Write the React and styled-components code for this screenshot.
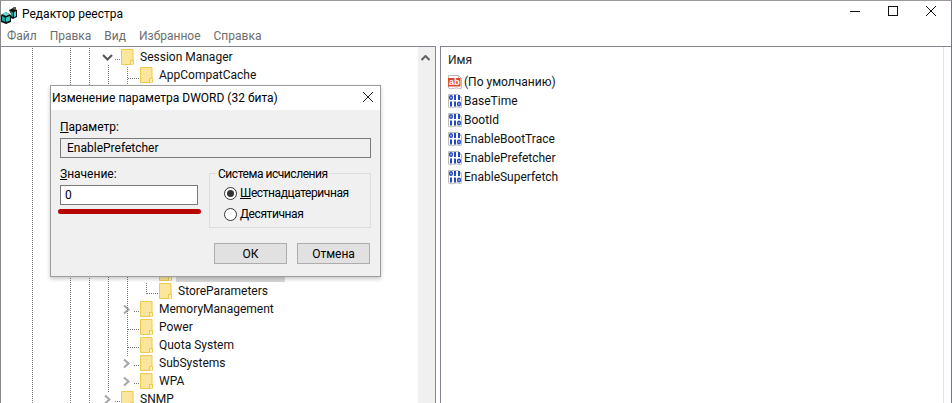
import React from "react";
import styled, { createGlobalStyle } from "styled-components";

const Global = createGlobalStyle`
  html, body { margin: 0; padding: 0; background: #fff; }
  body { font-family: Roboto, "Noto Sans", sans-serif; font-size: 12px; color: #000; overflow: hidden; }
`;

const Win = styled.div`
  width: 952px; height: 403px; box-sizing: border-box; position: relative; overflow: hidden;
  border-top: 1px solid #9a9a9a; border-left: 1px solid #8a8a8a; border-right: 1px solid #6f7780;
  display: flex; flex-direction: column; background: #fff;
`;
const TitleBar = styled.div`
  height: 25px; display: flex; align-items: center; flex: none;
`;
const AppIcon = styled.svg`width: 17px; height: 17px; flex: none; margin-right: 4px; margin-top: 3px;`;
const TitleText = styled.span`flex: 1; font-size: 12px;`;
const Controls = styled.div`display: flex; padding-right: 1px; align-self: flex-start;`;
const Ctrl = styled.svg`width: 38px; height: 21px; display: block;`;
const Menu = styled.div`
  height: 20px; display: flex; align-items: center; flex: none; color: #6d6d6d;
`;
const MenuItem = styled.span`padding: 0 7px 0 6px; font-size: 12px;`;
const Panes = styled.div`flex: 1; display: flex; min-height: 0;`;
const TreePane = styled.div`
  width: 435px; flex: none; margin-left: -1px; border-top: 1px solid #828790; border-right: 1px solid #828790;
  display: flex; position: relative; box-sizing: content-box;
`;
const Tree = styled.div`flex: 1; position: relative; padding-top: 1px; overflow: hidden;`;
const Guides = styled.svg`position: absolute; left: 0; top: 0; width: 418px; height: 357px; pointer-events: none;`;
const Row = styled.div`
  height: 18px; display: flex; align-items: center; position: relative;
  padding-left: ${p => p.$x}px; white-space: nowrap;
`;
const Hidden = styled.div`height: ${p => p.$n * 18}px;`;
const Chevron = styled.svg`position: absolute; left: ${p => p.$x}px; top: 4px; width: 11px; height: 11px;`;
const Folder = styled.svg`width: 13px; height: 16px; flex: none; margin-right: 6px;`;
const Label = styled.span`font-size: 12px; color: #111;`;
const SelectBar = styled.div`width: 109px; height: 18px; background: #d9d9d9; margin-left: -2px;`;
const Scrollbar = styled.div`width: 17px; flex: none; background: #f0f0f0; display: flex; justify-content: center; align-items: flex-start;`;
const ScrollUp = styled.svg`width: 9px; height: 6px; margin-top: 8px; margin-left: -3px;`;
const Gap = styled.div`width: 4px; flex: none;`;
const ListPane = styled.div`
  flex: 1; border-top: 1px solid #828790; border-left: 1px solid #828790; position: relative;
  display: flex; flex-direction: column;
`;
const ColumnEdge = styled.div`position: absolute; right: 7px; top: 0; bottom: 0; width: 1px; background: #e2e2e2;`;
const ColHeader = styled.div`height: 25px; padding-left: 7px; display: flex; align-items: center; flex: none; color: #222;`;
const ValueRow = styled.div`height: 19px; display: flex; align-items: center; padding-left: 6px;`;
const ValueIcon = styled.svg`width: 16px; height: 16px; flex: none; margin-right: 1px;`;

const Dialog = styled.div`
  position: absolute; left: 49px; top: 84px; width: 331px; height: 192px; box-sizing: border-box;
  border: 1px solid #9d9d9d; background: #f0f0f0; box-shadow: 0 2px 4px rgba(0,0,0,.22);
  display: flex; flex-direction: column; font-size: 12px;
`;
const DlgTitle = styled.div`
  height: 24px; background: #fff; display: flex; align-items: center; justify-content: space-between;
  padding-left: 1px; flex: none;
`;
const DlgClose = styled.svg`width: 10px; height: 10px; margin-right: 7px; margin-bottom: 2px;`;
const DlgBody = styled.div`flex: 1; padding: 8px 9px 0 9px; display: flex; flex-direction: column; position: relative;`;
const FieldLabel = styled.div`height: 18px; line-height: 18px;`;
const U = styled.u`text-underline-offset: 1px;`;
const ReadOnly = styled.div`
  height: 18px; border: 1px solid #7a7a7a; background: #f0f0f0; margin-top: 2px; line-height: 18px;
  padding-left: 6px; box-sizing: content-box;
`;
const Columns = styled.div`display: flex; margin-top: 7px;`;
const Left = styled.div`width: 138px; flex: none; margin-right: 11px;`;
const ValueInput = styled.div`
  height: 18px; border: 1px solid #7a7a7a; background: #fff; line-height: 18px; padding-left: 4px; margin-top: 2px;
`;
const Group = styled.div`
  flex: 1; height: 55px; margin-top: 8px; border: 1px solid #dcdcdc; position: relative;
  display: flex; flex-direction: column; padding: 10px 0 0 14px; box-sizing: border-box; gap: 3px;
`;
const Legend = styled.span`
  position: absolute; left: 7px; top: -8px; background: #f0f0f0; padding: 0 1px; line-height: 16px; letter-spacing: -0.45px;
`;
const RadioRow = styled.div`display: flex; align-items: center; height: 18px; letter-spacing: -0.42px;`;
const Radio = styled.span`
  width: 13px; height: 13px; border-radius: 50%; border: 1px solid #333; background: #fff; box-sizing: border-box;
  display: inline-flex; align-items: center; justify-content: center; margin-right: 3px; flex: none;
  &::after { content: ""; width: 7px; height: 7px; border-radius: 50%; background: ${p => p.$on ? "#333" : "transparent"}; }
`;
const Buttons = styled.div`display: flex; justify-content: flex-end; gap: 10px; margin-top: 15px; padding-right: 1px;`;
const Btn = styled.div`
  width: 73px; height: 21px; box-sizing: border-box; border: 1px solid #adadad; background: #e1e1e1;
  display: flex; align-items: center; justify-content: center;
`;
const RedMark = styled.div`
  position: absolute; left: 7px; top: 99px; width: 143px; height: 5px; border-radius: 3px; background: #b80500;
`;

const FolderIcon = () => (
  <Folder viewBox="0 0 13 16">
    <path d="M.5.5h11.500v15H.5z" fill="#fbe69c" stroke="#eec94f" />
    <path d="M9.500 15.500v-4h3v4" fill="#fff1bd" stroke="#eec94f" />
  </Folder>
);
const ChevronRight = ({ x }) => (
  <Chevron $x={x} viewBox="0 0 11 11"><path d="M3 1.500 7.500 5.500 3 9.500" fill="none" stroke="#a6a6a6" strokeWidth="2" /></Chevron>
);
const ChevronDown = ({ x }) => (
  <Chevron $x={x} viewBox="0 0 11 11"><path d="M1 3 5.500 7.500 10 3" fill="none" stroke="#555" strokeWidth="2" /></Chevron>
);
const Page = ({ children }) => (
  <ValueIcon viewBox="0 0 16 16">
    <path d="M1.500 1.500h10l3 3v9.600c-2 1.400-3.500-.8-6.500 0s-4.500 1-6.500 0z" fill="#fff" stroke="#bdbdbd" />
    <path d="M11.500 1.500v3h3" fill="none" stroke="#bdbdbd" />
    {children}
  </ValueIcon>
);
const AbIcon = () => (
  <Page>
    <rect x="1" y="4" width="12.500" height="8.500" fill="#d9482a" />
    <text x="7.200" y="11.200" fontSize="9.500" fontWeight="700" fontFamily="Liberation Sans, sans-serif" fill="#fff" textAnchor="middle">ab</text>
  </Page>
);
const Bit = ({ x, y, on }) => on
  ? <rect x={x + 1} y={y} width="2" height="5" fill="#2447c8" />
  : <rect x={x + .75} y={y + .75} width="2.500" height="3.500" rx="1.200" fill="none" stroke="#2447c8" strokeWidth="1.500" />;
const BinIcon = () => (
  <Page>
    <Bit x={2} y={2} />
    <Bit x={6} y={2} on />
    <Bit x={10} y={2} on />
    <Bit x={2} y={8.500} on />
    <Bit x={6} y={8.500} on />
    <Bit x={10} y={8.500} />
  </Page>
);
const line = (x1, y1, x2, y2) => <line key={`${x1}-${y1}-${x2}-${y2}`} x1={x1} y1={y1} x2={x2} y2={y2} />;

export default function App() {
  return (
    <Win>
      <Global />
      <TitleBar>
        <AppIcon viewBox="0 0 17 17">
          <path d="M0 8l5-3 5 3v7l-5 2-5-2z" fill="#111" />
          <path d="M1 9l3 1.500v4.500l-3-1.500z" fill="#1aa5a0" />
          <path d="M5 10.500l4-1.500v4.500l-4 1.500z" fill="#36c6c0" />
          <path d="M8 3l4-2 4 2v7l-4 2-2-1V7z" fill="#111" />
          <path d="M9 4l3 1.500v4.500l-2-1V6.500z" fill="#1d8f8c" />
          <path d="M13 5.500l2-1.500v5l-2 1.500z" fill="#4fd3cc" />
          <path d="M12 0l3-.5v2.500l-2 1z" fill="#555" />
          <path d="M1 7l4-2 4 2-4 2z" fill="#6fd9d2" />
        </AppIcon>
        <TitleText>Редактор реестра</TitleText>
        <Controls>
          <Ctrl viewBox="0 0 38 21"><path d="M14 10.500h10" stroke="#111" /></Ctrl>
          <Ctrl viewBox="0 0 38 21"><rect x="14.500" y="5.500" width="9" height="9" fill="none" stroke="#111" /></Ctrl>
          <Ctrl viewBox="0 0 38 21"><path d="M14 5l10 10M24 5 14 15" stroke="#111" fill="none" /></Ctrl>
        </Controls>
      </TitleBar>
      <Menu>
        <MenuItem>Файл</MenuItem>
        <MenuItem>Правка</MenuItem>
        <MenuItem>Вид</MenuItem>
        <MenuItem>Избранное</MenuItem>
        <MenuItem>Справка</MenuItem>
      </Menu>
      <Panes>
        <TreePane>
          <Tree>
            <Row $x={121}><ChevronDown x={102} /><FolderIcon /><Label>Session Manager</Label></Row>
            <Row $x={140}><FolderIcon /><Label>AppCompatCache</Label></Row>
            <Hidden $n={10} />
            <Row $x={159}><FolderIcon /><SelectBar /></Row>
            <Row $x={159}><FolderIcon /><Label>StoreParameters</Label></Row>
            <Row $x={140}><ChevronRight x={121} /><FolderIcon /><Label>MemoryManagement</Label></Row>
            <Row $x={140}><FolderIcon /><Label>Power</Label></Row>
            <Row $x={140}><FolderIcon /><Label>Quota System</Label></Row>
            <Row $x={140}><ChevronRight x={121} /><FolderIcon /><Label>SubSystems</Label></Row>
            <Row $x={140}><ChevronRight x={121} /><FolderIcon /><Label>WPA</Label></Row>
            <Row $x={121}><ChevronRight x={102} /><FolderIcon /><Label>SNMP</Label></Row>
            <Guides viewBox="0 0 418 357" stroke="#777" strokeDasharray="1 1" fill="none" shapeRendering="crispEdges">
              {line(32.500, 1, 32.500, 357)}
              {line(70.500, 1, 70.500, 357)}
              {line(89.500, 1, 89.500, 357)}
              {line(108.500, 18, 108.500, 345)}
              {line(115, 12.500, 120, 12.500)}
              {line(115, 354.500, 120, 354.500)}
              {line(127.500, 20, 127.500, 310)}
              {line(128, 31.500, 139, 31.500)}
              {line(134, 264.500, 139, 264.500)}
              {line(128, 282.500, 139, 282.500)}
              {line(128, 300.500, 139, 300.500)}
              {line(134, 318.500, 139, 318.500)}
              {line(134, 336.500, 139, 336.500)}
              {line(146.500, 236, 146.500, 247)}
              {line(147, 246.500, 158, 246.500)}
            </Guides>
          </Tree>
          <Scrollbar>
            <ScrollUp viewBox="0 0 9 6"><path d="M.5 5 4.500 1l4 4" fill="none" stroke="#606060" strokeWidth="2" /></ScrollUp>
          </Scrollbar>
        </TreePane>
        <Gap />
        <ListPane>
          <ColumnEdge />
          <ColHeader>Имя</ColHeader>
          <ValueRow><AbIcon /><Label>(По умолчанию)</Label></ValueRow>
          {["BaseTime", "BootId", "EnableBootTrace", "EnablePrefetcher", "EnableSuperfetch"].map(n => (
            <ValueRow key={n}><BinIcon /><Label>{n}</Label></ValueRow>
          ))}
        </ListPane>
      </Panes>
      <Dialog>
        <DlgTitle>
          Изменение параметра DWORD (32 бита)
          <DlgClose viewBox="0 0 10 10"><path d="M0 0l10 10M10 0 0 10" stroke="#222" fill="none" /></DlgClose>
        </DlgTitle>
        <DlgBody>
          <FieldLabel><U>П</U>араметр:</FieldLabel>
          <ReadOnly>EnablePrefetcher</ReadOnly>
          <Columns>
            <Left>
              <FieldLabel><U>З</U>начение:</FieldLabel>
              <ValueInput>0</ValueInput>
            </Left>
            <Group>
              <Legend>Система исчисления</Legend>
              <RadioRow><Radio $on /><span><U>Ш</U>естнадцатеричная</span></RadioRow>
              <RadioRow><Radio /><span><U>Д</U>есятичная</span></RadioRow>
            </Group>
          </Columns>
          <Buttons><Btn>ОК</Btn><Btn>Отмена</Btn></Buttons>
          <RedMark />
        </DlgBody>
      </Dialog>
    </Win>
  );
}
